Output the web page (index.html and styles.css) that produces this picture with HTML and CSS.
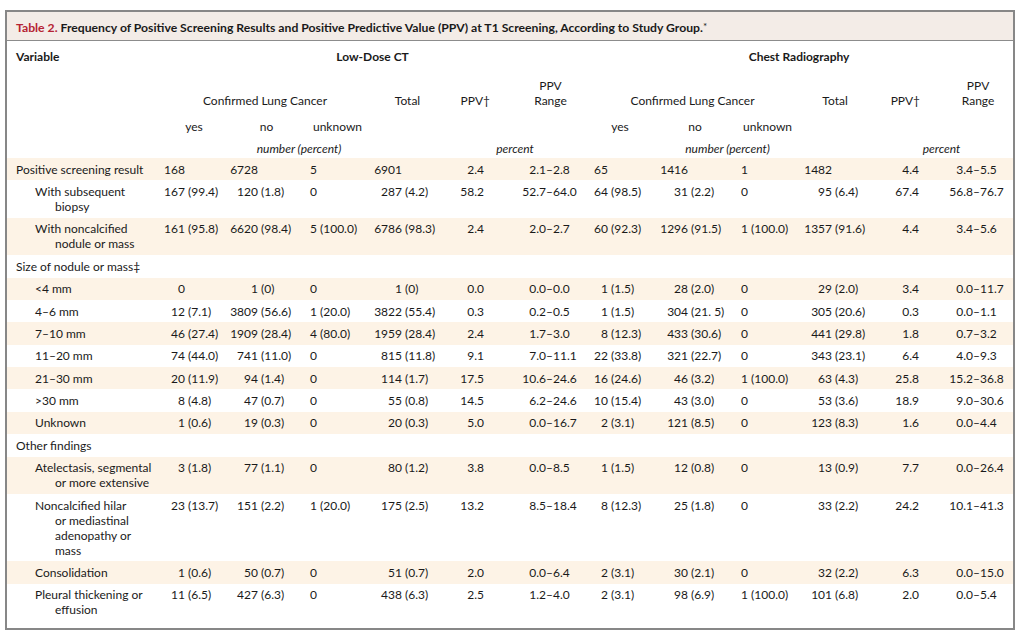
FILE: index.html
```html
<!DOCTYPE html>
<html>
<head>
<meta charset="utf-8">
<title>Table 2</title>
<link rel="stylesheet" href="styles.css">
</head>
<body>
<div class="frame">
  <div class="title"><span class="tnum">Table 2.</span> Frequency of Positive Screening Results and Positive Predictive Value (PPV) at T1 Screening, According to Study Group.<span class="ast">*</span></div>
  <table class="tbl">
    <colgroup>
      <col class="c-label"><col class="c-yes"><col class="c-no"><col class="c-unk"><col class="c-tot"><col class="c-ppv"><col class="c-rng">
      <col class="c-cyes"><col class="c-cno"><col class="c-cunk"><col class="c-ctot"><col class="c-cppv"><col class="c-crng">
    </colgroup>
    <thead>
      <tr class="h1">
        <th class="hl">Variable</th>
        <th colspan="6" class="grp">Low-Dose CT</th>
        <th colspan="6" class="grp">Chest Radiography</th>
      </tr>
      <tr class="h2">
        <th></th>
        <th colspan="3">Confirmed Lung Cancer</th>
        <th>Total</th>
        <th class="hppv">PPV†</th>
        <th class="hrng">PPV<br>Range</th>
        <th colspan="3">Confirmed Lung Cancer</th>
        <th>Total</th>
        <th class="hcppv">PPV†</th>
        <th class="hcrng">PPV<br>Range</th>
      </tr>
      <tr class="h3">
        <th></th>
        <th>yes</th><th>no</th><th>unknown</th>
        <th></th><th></th><th></th>
        <th>yes</th><th>no</th><th>unknown</th>
        <th></th><th></th><th></th>
      </tr>
      <tr class="h4">
        <th></th>
        <th></th>
        <th colspan="2" class="it">number (percent)</th>
        <th></th>
        <th colspan="2" class="it">percent</th>
        <th></th>
        <th colspan="2" class="it">number (percent)</th>
        <th></th>
        <th colspan="2" class="it">percent</th>
      </tr>
    </thead>
    <tbody>
      <tr>
        <td class="lab">Positive screening result</td>
        <td class="yes"><span class="n">168</span></td>
        <td class="no"><span class="n">6728</span></td>
        <td class="unk">5</td>
        <td class="tot"><span class="n">6901</span></td>
        <td class="ppv">2.4</td>
        <td class="rng"><span class="lo">2.1</span>–2.8</td>
        <td class="cyes"><span class="n">65</span></td>
        <td class="cno"><span class="n">1416</span></td>
        <td class="cunk">1</td>
        <td class="ctot"><span class="n">1482</span></td>
        <td class="cppv">4.4</td>
        <td class="crng"><span class="lo">3.4</span>–5.5</td>
      </tr>
      <tr>
        <td class="lab sub">With subsequent<br>biopsy</td>
        <td class="yes"><span class="n">167</span> (99.4)</td>
        <td class="no"><span class="n">120</span> (1.8)</td>
        <td class="unk">0</td>
        <td class="tot"><span class="n">287</span> (4.2)</td>
        <td class="ppv">58.2</td>
        <td class="rng"><span class="lo">52.7</span>–64.0</td>
        <td class="cyes"><span class="n">64</span> (98.5)</td>
        <td class="cno"><span class="n">31</span> (2.2)</td>
        <td class="cunk">0</td>
        <td class="ctot"><span class="n">95</span> (6.4)</td>
        <td class="cppv">67.4</td>
        <td class="crng"><span class="lo">56.8</span>–76.7</td>
      </tr>
      <tr>
        <td class="lab sub">With noncalcified<br>nodule or mass</td>
        <td class="yes"><span class="n">161</span> (95.8)</td>
        <td class="no"><span class="n">6620</span> (98.4)</td>
        <td class="unk">5 (100.0)</td>
        <td class="tot"><span class="n">6786</span> (98.3)</td>
        <td class="ppv">2.4</td>
        <td class="rng"><span class="lo">2.0</span>–2.7</td>
        <td class="cyes"><span class="n">60</span> (92.3)</td>
        <td class="cno"><span class="n">1296</span> (91.5)</td>
        <td class="cunk">1 (100.0)</td>
        <td class="ctot"><span class="n">1357</span> (91.6)</td>
        <td class="cppv">4.4</td>
        <td class="crng"><span class="lo">3.4</span>–5.6</td>
      </tr>
      <tr>
        <td class="lab">Size of nodule or mass‡</td>
        <td></td><td></td><td></td><td></td><td></td><td></td>
        <td></td><td></td><td></td><td></td><td></td><td></td>
      </tr>
      <tr>
        <td class="lab sub">&lt;4 mm</td>
        <td class="yes"><span class="n">0</span></td>
        <td class="no"><span class="n">1</span> (0)</td>
        <td class="unk">0</td>
        <td class="tot"><span class="n">1</span> (0)</td>
        <td class="ppv">0.0</td>
        <td class="rng"><span class="lo">0.0</span>–0.0</td>
        <td class="cyes"><span class="n">1</span> (1.5)</td>
        <td class="cno"><span class="n">28</span> (2.0)</td>
        <td class="cunk">0</td>
        <td class="ctot"><span class="n">29</span> (2.0)</td>
        <td class="cppv">3.4</td>
        <td class="crng"><span class="lo">0.0</span>–11.7</td>
      </tr>
      <tr>
        <td class="lab sub">4–6 mm</td>
        <td class="yes"><span class="n">12</span> (7.1)</td>
        <td class="no"><span class="n">3809</span> (56.6)</td>
        <td class="unk">1 (20.0)</td>
        <td class="tot"><span class="n">3822</span> (55.4)</td>
        <td class="ppv">0.3</td>
        <td class="rng"><span class="lo">0.2</span>–0.5</td>
        <td class="cyes"><span class="n">1</span> (1.5)</td>
        <td class="cno"><span class="n">304</span> (21. 5)</td>
        <td class="cunk">0</td>
        <td class="ctot"><span class="n">305</span> (20.6)</td>
        <td class="cppv">0.3</td>
        <td class="crng"><span class="lo">0.0</span>–1.1</td>
      </tr>
      <tr>
        <td class="lab sub">7–10 mm</td>
        <td class="yes"><span class="n">46</span> (27.4)</td>
        <td class="no"><span class="n">1909</span> (28.4)</td>
        <td class="unk">4 (80.0)</td>
        <td class="tot"><span class="n">1959</span> (28.4)</td>
        <td class="ppv">2.4</td>
        <td class="rng"><span class="lo">1.7</span>–3.0</td>
        <td class="cyes"><span class="n">8</span> (12.3)</td>
        <td class="cno"><span class="n">433</span> (30.6)</td>
        <td class="cunk">0</td>
        <td class="ctot"><span class="n">441</span> (29.8)</td>
        <td class="cppv">1.8</td>
        <td class="crng"><span class="lo">0.7</span>–3.2</td>
      </tr>
      <tr>
        <td class="lab sub">11–20 mm</td>
        <td class="yes"><span class="n">74</span> (44.0)</td>
        <td class="no"><span class="n">741</span> (11.0)</td>
        <td class="unk">0</td>
        <td class="tot"><span class="n">815</span> (11.8)</td>
        <td class="ppv">9.1</td>
        <td class="rng"><span class="lo">7.0</span>–11.1</td>
        <td class="cyes"><span class="n">22</span> (33.8)</td>
        <td class="cno"><span class="n">321</span> (22.7)</td>
        <td class="cunk">0</td>
        <td class="ctot"><span class="n">343</span> (23.1)</td>
        <td class="cppv">6.4</td>
        <td class="crng"><span class="lo">4.0</span>–9.3</td>
      </tr>
      <tr>
        <td class="lab sub">21–30 mm</td>
        <td class="yes"><span class="n">20</span> (11.9)</td>
        <td class="no"><span class="n">94</span> (1.4)</td>
        <td class="unk">0</td>
        <td class="tot"><span class="n">114</span> (1.7)</td>
        <td class="ppv">17.5</td>
        <td class="rng"><span class="lo">10.6</span>–24.6</td>
        <td class="cyes"><span class="n">16</span> (24.6)</td>
        <td class="cno"><span class="n">46</span> (3.2)</td>
        <td class="cunk">1 (100.0)</td>
        <td class="ctot"><span class="n">63</span> (4.3)</td>
        <td class="cppv">25.8</td>
        <td class="crng"><span class="lo">15.2</span>–36.8</td>
      </tr>
      <tr>
        <td class="lab sub">&gt;30 mm</td>
        <td class="yes"><span class="n">8</span> (4.8)</td>
        <td class="no"><span class="n">47</span> (0.7)</td>
        <td class="unk">0</td>
        <td class="tot"><span class="n">55</span> (0.8)</td>
        <td class="ppv">14.5</td>
        <td class="rng"><span class="lo">6.2</span>–24.6</td>
        <td class="cyes"><span class="n">10</span> (15.4)</td>
        <td class="cno"><span class="n">43</span> (3.0)</td>
        <td class="cunk">0</td>
        <td class="ctot"><span class="n">53</span> (3.6)</td>
        <td class="cppv">18.9</td>
        <td class="crng"><span class="lo">9.0</span>–30.6</td>
      </tr>
      <tr>
        <td class="lab sub">Unknown</td>
        <td class="yes"><span class="n">1</span> (0.6)</td>
        <td class="no"><span class="n">19</span> (0.3)</td>
        <td class="unk">0</td>
        <td class="tot"><span class="n">20</span> (0.3)</td>
        <td class="ppv">5.0</td>
        <td class="rng"><span class="lo">0.0</span>–16.7</td>
        <td class="cyes"><span class="n">2</span> (3.1)</td>
        <td class="cno"><span class="n">121</span> (8.5)</td>
        <td class="cunk">0</td>
        <td class="ctot"><span class="n">123</span> (8.3)</td>
        <td class="cppv">1.6</td>
        <td class="crng"><span class="lo">0.0</span>–4.4</td>
      </tr>
      <tr>
        <td class="lab">Other findings</td>
        <td></td><td></td><td></td><td></td><td></td><td></td>
        <td></td><td></td><td></td><td></td><td></td><td></td>
      </tr>
      <tr>
        <td class="lab sub">Atelectasis, segmental<br>or more extensive</td>
        <td class="yes"><span class="n">3</span> (1.8)</td>
        <td class="no"><span class="n">77</span> (1.1)</td>
        <td class="unk">0</td>
        <td class="tot"><span class="n">80</span> (1.2)</td>
        <td class="ppv">3.8</td>
        <td class="rng"><span class="lo">0.0</span>–8.5</td>
        <td class="cyes"><span class="n">1</span> (1.5)</td>
        <td class="cno"><span class="n">12</span> (0.8)</td>
        <td class="cunk">0</td>
        <td class="ctot"><span class="n">13</span> (0.9)</td>
        <td class="cppv">7.7</td>
        <td class="crng"><span class="lo">0.0</span>–26.4</td>
      </tr>
      <tr>
        <td class="lab sub">Noncalcified hilar<br>or mediastinal<br>adenopathy or<br>mass</td>
        <td class="yes"><span class="n">23</span> (13.7)</td>
        <td class="no"><span class="n">151</span> (2.2)</td>
        <td class="unk">1 (20.0)</td>
        <td class="tot"><span class="n">175</span> (2.5)</td>
        <td class="ppv">13.2</td>
        <td class="rng"><span class="lo">8.5</span>–18.4</td>
        <td class="cyes"><span class="n">8</span> (12.3)</td>
        <td class="cno"><span class="n">25</span> (1.8)</td>
        <td class="cunk">0</td>
        <td class="ctot"><span class="n">33</span> (2.2)</td>
        <td class="cppv">24.2</td>
        <td class="crng"><span class="lo">10.1</span>–41.3</td>
      </tr>
      <tr>
        <td class="lab sub">Consolidation</td>
        <td class="yes"><span class="n">1</span> (0.6)</td>
        <td class="no"><span class="n">50</span> (0.7)</td>
        <td class="unk">0</td>
        <td class="tot"><span class="n">51</span> (0.7)</td>
        <td class="ppv">2.0</td>
        <td class="rng"><span class="lo">0.0</span>–6.4</td>
        <td class="cyes"><span class="n">2</span> (3.1)</td>
        <td class="cno"><span class="n">30</span> (2.1)</td>
        <td class="cunk">0</td>
        <td class="ctot"><span class="n">32</span> (2.2)</td>
        <td class="cppv">6.3</td>
        <td class="crng"><span class="lo">0.0</span>–15.0</td>
      </tr>
      <tr>
        <td class="lab sub">Pleural thickening or<br>effusion</td>
        <td class="yes"><span class="n">11</span> (6.5)</td>
        <td class="no"><span class="n">427</span> (6.3)</td>
        <td class="unk">0</td>
        <td class="tot"><span class="n">438</span> (6.3)</td>
        <td class="ppv">2.5</td>
        <td class="rng"><span class="lo">1.2</span>–4.0</td>
        <td class="cyes"><span class="n">2</span> (3.1)</td>
        <td class="cno"><span class="n">98</span> (6.9)</td>
        <td class="cunk">1 (100.0)</td>
        <td class="ctot"><span class="n">101</span> (6.8)</td>
        <td class="cppv">2.0</td>
        <td class="crng"><span class="lo">0.0</span>–5.4</td>
      </tr>
    </tbody>
  </table>
</div>
</body>
</html>
```
FILE: styles.css
```css
body {
  margin: 0;
  background: #ffffff;
  font-family: Lato, "Liberation Sans", sans-serif;
  font-size: 12px;
  color: #1a1a1a;
}

.frame {
  margin: 10px 0 0 5px;
  width: 1010px;
  height: 620px;
  box-sizing: border-box;
  border: 2px solid #878787;
}

.title {
  height: 28px;
  line-height: 28px;
  background: #f3ece7;
  border-bottom: 1px solid #8c8c8c;
  padding-left: 9px;
  font-weight: bold;
  font-size: 12.2px;
  color: #1a1a1a;
  white-space: nowrap;
}

.tnum {
  color: #b52333;
}

.ast {
  font-weight: normal;
  font-size: 10px;
  vertical-align: 2px;
}

.tbl {
  border-collapse: collapse;
  table-layout: fixed;
  width: 1006px;
}

.c-label { width: 153px; }
.c-yes { width: 68px; }
.c-no { width: 77px; }
.c-unk { width: 65px; }
.c-tot { width: 75px; }
.c-ppv { width: 45px; }
.c-rng { width: 95px; }
.c-cyes { width: 70px; }
.c-cno { width: 80px; }
.c-cunk { width: 65px; }
.c-ctot { width: 70px; }
.c-cppv { width: 55px; }
.c-crng { width: 88px; }

.tbl th {
  font-weight: normal;
  padding: 0 0 2.5px 0;
  line-height: 15px;
  text-align: center;
  vertical-align: bottom;
  white-space: nowrap;
}

.h1 { height: 30px; }
.tbl .h1 th { vertical-align: middle; padding: 0; font-weight: bold; }
.tbl .h1 .hl { text-align: left; padding-left: 9px; }
.h2 { height: 39px; }
.h3 { height: 26px; }
.h4 { height: 22px; }

.tbl th.hppv { text-align: right; padding-right: 0; }
.tbl th.hcppv { text-align: right; padding-right: 5px; }
.tbl th.hrng { padding-left: 26px; }
.tbl th.hcrng { padding-left: 18px; }

.it { font-style: italic; }

.tbl td {
  padding: 3.7px 0;
  line-height: 15px;
  vertical-align: top;
  white-space: nowrap;
}

.tbl tbody tr:nth-child(odd) td {
  background: #fdf3e6;
}

.tbl td.lab { padding-left: 9px; }
.tbl td.sub { padding-left: 48px; text-indent: -20px; }

.n {
  display: inline-block;
  text-align: right;
}

.lo {
  display: inline-block;
  text-align: right;
  width: 30px;
}

.tbl td.yes { padding-left: 2px; }
.yes .n { width: 23px; }
.tbl td.no { padding-left: 1px; }
.no .n { width: 29px; }
.tbl td.unk { padding-left: 5px; }
.tbl td.tot { padding-left: 3px; }
.tot .n { width: 29px; }
.tbl td.ppv { text-align: right; padding-right: 6px; }
.tbl td.rng { padding-left: 26px; }

.tbl td.cyes { padding-left: 2px; }
.cyes .n { width: 21px; }
.tbl td.cno { padding-left: 4px; }
.cno .n { width: 29px; }
.tbl td.cunk { padding-left: 6px; }
.tbl td.ctot { padding-left: 3px; }
.ctot .n { width: 29px; }
.tbl td.cppv { text-align: right; padding-right: 6px; }
.tbl td.crng { padding-left: 18px; }
```
